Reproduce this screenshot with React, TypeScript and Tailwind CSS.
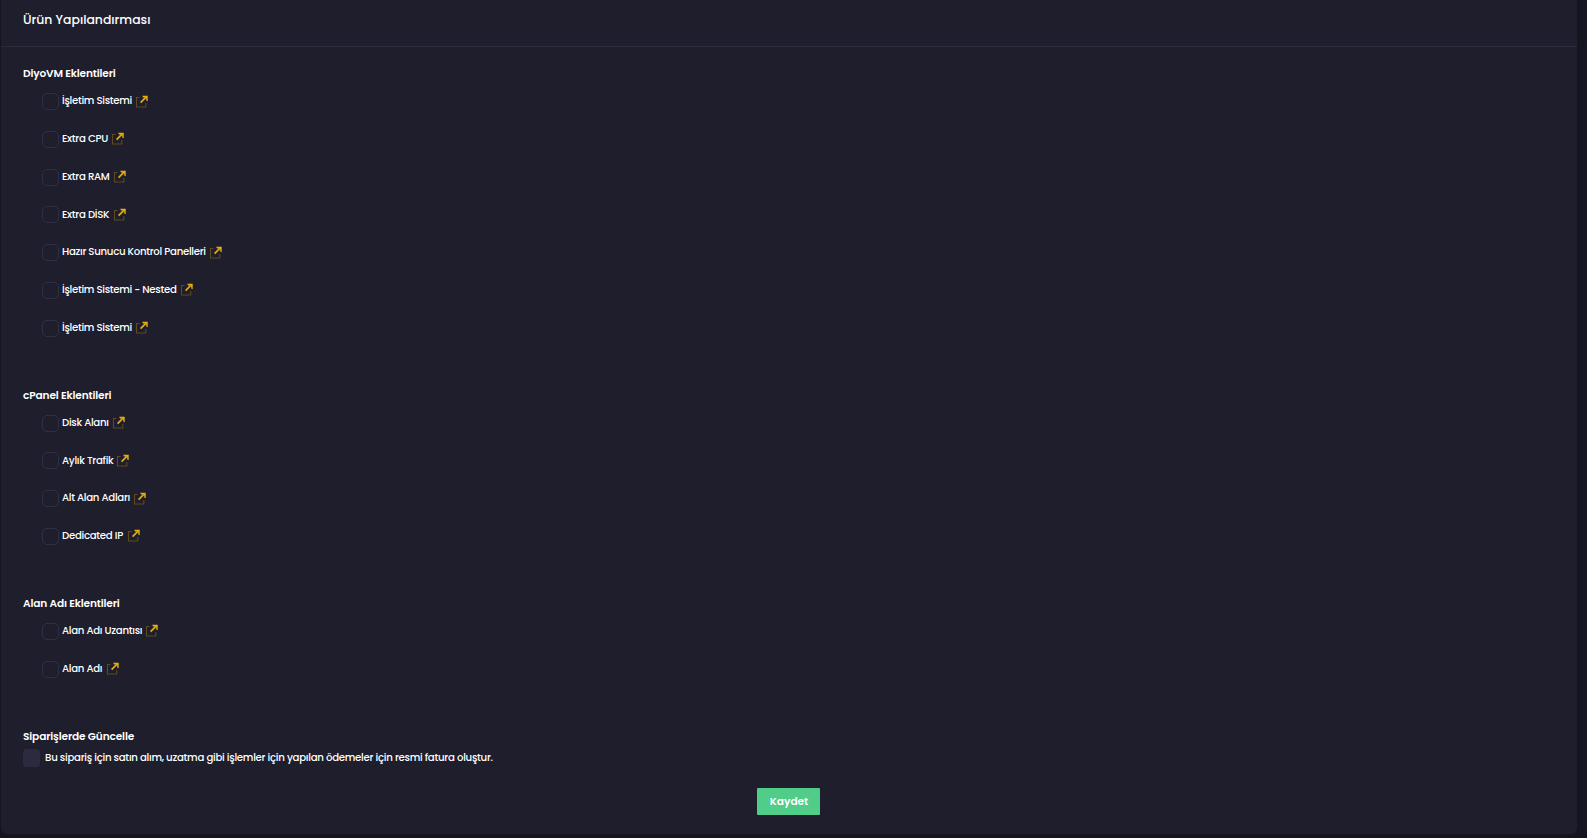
import React from 'react';

type Addon = { name: string; width: string };

const groups: { title: string; items: Addon[] }[] = [
  {
    title: 'DiyoVM Eklentileri',
    items: [
      { name: 'İşletim Sistemi', width: 'w-[70px]' },
      { name: 'Extra CPU', width: 'w-[46px]' },
      { name: 'Extra RAM', width: 'w-[48px]' },
      { name: 'Extra DİSK', width: 'w-[48px]' },
      { name: 'Hazır Sunucu Kontrol Panelleri', width: 'w-[144px]' },
      { name: 'İşletim Sistemi - Nested', width: 'w-[115px]' },
      { name: 'İşletim Sistemi', width: 'w-[70px]' },
    ],
  },
  {
    title: 'cPanel Eklentileri',
    items: [
      { name: 'Disk Alanı', width: 'w-[47px]' },
      { name: 'Aylık Trafik', width: 'w-[51px]' },
      { name: 'Alt Alan Adları', width: 'w-[68px]' },
      { name: 'Dedicated IP', width: 'w-[62px]' },
    ],
  },
  {
    title: 'Alan Adı Eklentileri',
    items: [
      { name: 'Alan Adı Uzantısı', width: 'w-[80px]' },
      { name: 'Alan Adı', width: 'w-[41px]' },
    ],
  },
];

function ExternalIcon() {
  return (
    <svg className="w-[13px] h-[13px] shrink-0" viewBox="0 0 13 13" fill="none">
      <path d="M4.5 2.5H1.5V12H10.8V8" stroke="#5f4a20" strokeWidth="1.1" />
      <path d="M5.6 7.6L10.8 2.4" stroke="#e5b00b" strokeWidth="1.6" />
      <path d="M7.2 0.8H12.7V6.3L11.2 5.6V3.2L10.4 2.4H8Z" fill="#e5b00b" />
    </svg>
  );
}

export default function App() {
  return (
    <div className="h-[838px] bg-[#151521] pl-px pr-[10px] overflow-hidden font-['Poppins','Inter',sans-serif] text-white">
      <div className="h-[834px] bg-[#1e1e2d] rounded-b-md">
        <div className="h-[47px] border-b border-[#2b2b40] pl-[22px] pt-[10px]">
          <h3 className="text-[12.4px] leading-5 font-medium">Ürün Yapılandırması</h3>
        </div>

        <div className="pl-[22px] pt-[18px]">
          {groups.map((group) => (
            <div key={group.title} className="pb-[29.8px]">
              <h4 className="h-[27.5px] pt-px text-[10.6px] leading-4 font-semibold tracking-[-0.15px] whitespace-nowrap">{group.title}</h4>
              {group.items.map((item, i) => (
                <div key={i} className="h-[37.75px] pl-[19px] flex items-start">
                  <span className="w-[17px] h-[17px] mt-[0.55px] shrink-0 rounded-[5px] border border-[#2f2f46]" />
                  <span className={`ml-[3px] pt-[0.8px] text-[10.2px] leading-4 font-medium tracking-[-0.3px] whitespace-nowrap ${item.width}`}>{item.name}</span>
                  <span className="ml-[3px] mt-[2px]"><ExternalIcon /></span>
                </div>
              ))}
            </div>
          ))}

          <h4 className="mt-[1.2px] text-[10.6px] leading-4 font-semibold tracking-[-0.15px]">Siparişlerde Güncelle</h4>
          <div className="flex items-center mt-1">
            <span className="w-[17px] h-[18px] rounded-[4px] bg-[#2b2b40]" />
            <span className="ml-[5px] text-[10.2px] leading-4 font-medium tracking-[-0.28px] whitespace-nowrap">
              Bu sipariş için satın alım, uzatma gibi işlemler için yapılan ödemeler için resmi fatura oluştur.
            </span>
          </div>
        </div>

        <div className="flex justify-center mt-[21px] pr-px">
          <button className="w-[63px] h-[27px] pt-px pl-px rounded-[1px] bg-[#50cd89] text-[10.6px] font-semibold">Kaydet</button>
        </div>
      </div>
    </div>
  );
}
